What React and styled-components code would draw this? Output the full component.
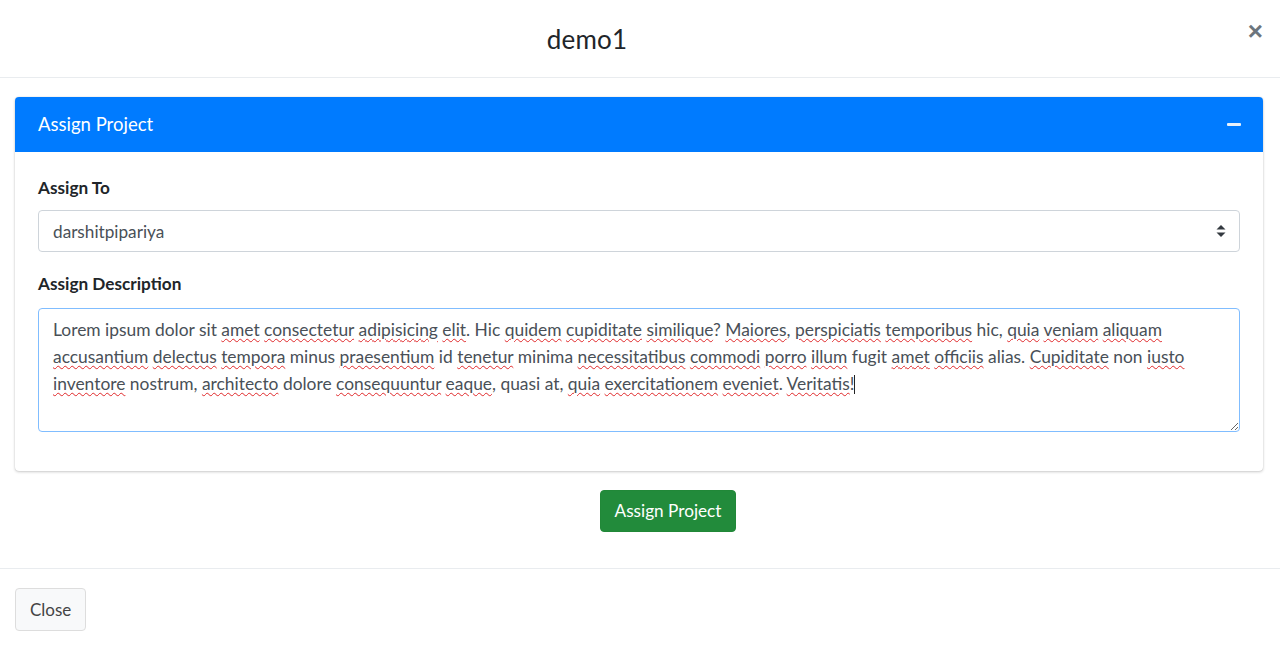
import React from 'react';
import styled, { createGlobalStyle } from 'styled-components';

const GlobalStyle = createGlobalStyle`
  html, body {
    margin: 0;
    padding: 0;
    background: #fff;
    font-family: Lato, "Open Sans", sans-serif;
    color: #212529;
  }
`;

const words = [
  ['Lorem ipsum dolor sit ', 0], ['amet', 1], [' ', 0], ['consectetur', 1], [' ', 0], ['adipisicing', 1], [' ', 0], ['elit', 1],
  ['. Hic ', 0], ['quidem', 1], [' ', 0], ['cupiditate', 1], [' ', 0], ['similique', 1], ['? ', 0], ['Maiores', 1], [', ', 0],
  ['perspiciatis', 1], [' ', 0], ['temporibus', 1], [' hic, ', 0], ['quia', 1], [' ', 0], ['veniam', 1], [' ', 0], ['aliquam', 1],
  [' ', 0], ['accusantium', 1], [' ', 0], ['delectus', 1], [' ', 0], ['tempora', 1], [' minus ', 0], ['praesentium', 1], [' id ', 0],
  ['tenetur', 1], [' minima ', 0], ['necessitatibus', 1], [' ', 0], ['commodi', 1], [' ', 0], ['porro', 1], [' ', 0], ['illum', 1],
  [' fugit ', 0], ['amet', 1], [' ', 0], ['officiis', 1], [' alias. ', 0], ['Cupiditate', 1], [' non ', 0], ['iusto', 1], [' ', 0],
  ['inventore', 1], [' nostrum, ', 0], ['architecto', 1], [' dolore ', 0], ['consequuntur', 1], [' ', 0], ['eaque', 1],
  [', quasi at, ', 0], ['quia', 1], [' ', 0], ['exercitationem', 1], [' ', 0], ['eveniet', 1], ['. ', 0], ['Veritatis', 1], ['!', 0],
];

function App() {
  return (
    <>
      <GlobalStyle />
      <Modal>
        <Header>
          <Title>demo1</Title>
          <CloseX>×</CloseX>
        </Header>

        <Body>
          <Card>
            <CardHeader>
              <CardTitle>Assign Project</CardTitle>
              <Minus />
            </CardHeader>
            <CardBody>
              <Group>
                <Label>Assign To</Label>
                <SelectWrap>
                  <Select defaultValue="darshitpipariya">
                    <option>darshitpipariya</option>
                  </Select>
                  <Arrows width="10" height="14" viewBox="0 0 10 14">
                    <path d="M5 1 L9.5 5.5 H0.5 Z" fill="#343a40" />
                    <path d="M5 13 L9.5 8.5 H0.5 Z" fill="#343a40" />
                  </Arrows>
                </SelectWrap>
              </Group>
              <Group>
                <Label>Assign Description</Label>
                <TextArea>
                  {words.map(([w, bad], i) => bad ? <Typo key={i}>{w}</Typo> : <span key={i}>{w}</span>)}
                  <Caret />
                </TextArea>
              </Group>
            </CardBody>
          </Card>

          <Center>
            <SuccessButton>Assign Project</SuccessButton>
          </Center>
        </Body>

        <Footer>
          <LightButton>Close</LightButton>
        </Footer>
      </Modal>
    </>
  );
}

export default App;

const Modal = styled.div`
  width: 1280px;
  height: 646px;
  background: #fff;
  display: flex;
  flex-direction: column;
`

const Header = styled.div`
  height: 78px;
  flex-shrink: 0;
  box-sizing: border-box;
  border-bottom: 1px solid #e9ecef;
  display: flex;
  align-items: center;
  justify-content: center;
  position: relative;
  padding-right: 106px;
`

const Title = styled.h4`
  margin: 0;
  font-size: 26px;
  font-weight: 400;
  color: #212529;
  letter-spacing: 0.2px;
`

const CloseX = styled.span`
  position: absolute;
  right: 17px;
  top: 16px;
  font-size: 26px;
  font-weight: 700;
  color: #6c757d;
  font-family: "Liberation Sans", sans-serif;
`

const Body = styled.div`
  padding: 19px 17px 0 15px;
  display: flex;
  flex-direction: column;
  height: 491px;
  flex-shrink: 0;
  box-sizing: border-box;
  border-bottom: 1px solid #e9ecef;
`

const Card = styled.div`
  border-radius: 4px;
  box-shadow: 0 0 1px rgba(0,0,0,.2), 0 1px 3px rgba(0,0,0,.2);
  background: #fff;
  overflow: hidden;
`

const CardHeader = styled.div`
  background: #007bff;
  height: 55px;
  display: flex;
  align-items: center;
  justify-content: space-between;
  padding: 0 23px;
`

const CardTitle = styled.div`
  color: #fff;
  font-size: 18.5px;
  font-weight: 400;
  margin-top: -2px;
`

const Minus = styled.span`
  display: block;
  width: 14px;
  height: 3px;
  border-radius: 1px;
  background: #e8f1fb;
  margin-right: -1px;
`

const CardBody = styled.div`
  padding: 25px 23px 39px 23px;
  display: flex;
  flex-direction: column;
  gap: 21px;
`

const Group = styled.div`
  display: flex;
  flex-direction: column;
`

const Label = styled.label`
  font-size: 17.2px;
  font-weight: 700;
  color: #212529;
  margin-bottom: 11px;
  line-height: 1.3;
`

const SelectWrap = styled.div`
  position: relative;
`

const Select = styled.select`
  appearance: none;
  width: 100%;
  height: 42px;
  border: 1px solid #ced4da;
  border-radius: 4px;
  background: #fff;
  padding: 0 14px;
  font-family: Lato, sans-serif;
  font-size: 17.2px;
  color: #495057;
  outline: none;
`

const Arrows = styled.svg`
  position: absolute;
  right: 14px;
  top: 14px;
  pointer-events: none;
`

const TextArea = styled.div`
  height: 124px;
  margin-top: 1px;
  box-sizing: border-box;
  border: 1px solid #80bdff;
  border-radius: 4px;
  padding: 7px 14px;
  font-size: 17.4px;
  line-height: 27px;
  color: #495057;
  resize: vertical;
  overflow: auto;
`

const Typo = styled.span`
  text-decoration: underline wavy #e0282a;
  text-decoration-thickness: 1px;
  text-underline-offset: 2px;
`

const Caret = styled.span`
  display: inline-block;
  width: 1px;
  height: 19px;
  background: #222;
  vertical-align: -4px;
`

const Center = styled.div`
  display: flex;
  justify-content: center;
  padding-top: 19px;
  padding-left: 58px;
`

const SuccessButton = styled.button`
  background: #228b3b;
  color: #fff;
  border: 1px solid #218838;
  border-radius: 4px;
  height: 42px;
  padding: 0 14px;
  font-family: Lato, sans-serif;
  font-size: 17.2px;
  cursor: pointer;
`

const Footer = styled.div`
  padding: 19px 15px;
  display: flex;
`

const LightButton = styled.button`
  background: #f8f9fa;
  color: #444;
  border: 1px solid #ddd;
  border-radius: 4px;
  height: 43px;
  padding: 0 14px;
  font-family: Lato, sans-serif;
  font-size: 17px;
  cursor: pointer;
`
